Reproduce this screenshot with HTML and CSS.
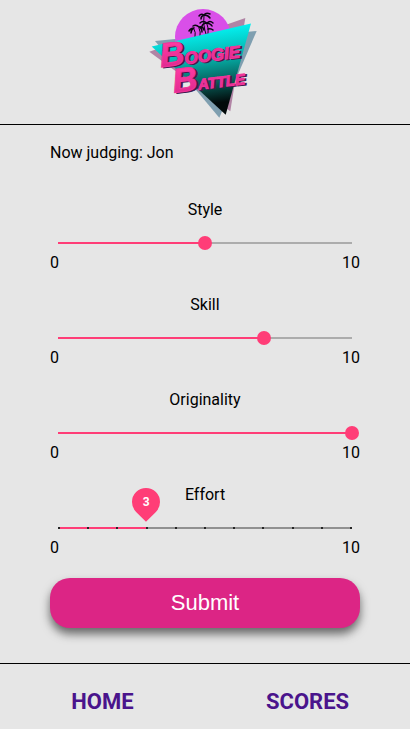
FILE: index.html
```html
<!DOCTYPE html>
<html lang="en">
<head>
  <meta charset="utf-8">
  <meta name="viewport" content="width=device-width, initial-scale=1">
  <title>Boogie Battle</title>
  <link rel="stylesheet" href="styles.css">
</head>
<body>
  <header class="header">
    <svg class="logo" viewBox="148 8 110 112" role="img" aria-label="Boogie Battle">
      <defs>
        <linearGradient id="teal" x1="0" y1="0" x2="0.15" y2="1">
          <stop offset="0.12" stop-color="#04f6f6"/>
          <stop offset="0.45" stop-color="#05b4ad"/>
          <stop offset="0.72" stop-color="#075e59"/>
          <stop offset="0.95" stop-color="#020a0a"/>
        </linearGradient>
        <linearGradient id="pink" x1="0" y1="0" x2="0" y2="1">
          <stop offset="0.2" stop-color="#ff3aa2"/>
          <stop offset="1" stop-color="#d9278c"/>
        </linearGradient>
      </defs>
      <path d="M155 41 256.700 31 219.300 117.700Z" fill="#7f9fb0"/>
      <path d="M149.300 51.700 245.300 18 230.300 111.300Z" fill="#b184a5"/>
      <circle cx="203" cy="37" r="28" fill="#d94fe8"/>
      <g fill="none" stroke="#0a0612" stroke-linecap="round" stroke-width="1">
        <path d="M206 34Q203 26 204 16M208 34Q209 28 207 24M195 37Q196 32 194 29M200 36Q201 32 199 28"/>
        <path stroke-width="1.500" d="M204 15Q201 13 199 16M204 15Q206 12 210 14M204 15Q208 15 210 18M204 15Q201 16 201 19M207 23Q203 20 200 23M207 23Q210 20 213 23M207 23Q203 23 202 26M207 23Q211 24 212 26M194 28Q191 28 189 31M194 28Q191 30 191 33M199 27Q196 24 193 26M199 27Q203 26 204 30M199 27Q202 28 202 32M208 29Q211 28 213 30"/>
      </g>
      <path d="M151.700 46.500 251 23.500 225.700 114.700Z" fill="url(#teal)"/>
      <g class="logo-shadow" transform="rotate(-7 162 68)">
        <text x="163" y="68"><tspan class="logo-cap">B</tspan><tspan class="logo-mid">OOGIE</tspan></text>
        <text x="173" y="95"><tspan class="logo-cap">B</tspan><tspan class="logo-low">ATTLE</tspan></text>
      </g>
      <g class="logo-face" aria-hidden="true" transform="rotate(-7 162 68)">
        <text x="161" y="67"><tspan class="logo-cap">B</tspan><tspan class="logo-mid">OOGIE</tspan></text>
        <text x="171" y="94"><tspan class="logo-cap">B</tspan><tspan class="logo-low">ATTLE</tspan></text>
      </g>
    </svg>
  </header>

  <main class="main">
    <p class="judging">Now judging: Jon</p>
    <form class="form">
      <div class="field">
        <label class="name" for="style">Style</label>
        <input class="slider" id="style" type="range" min="0" max="10" value="5" style="--value: 50%">
        <div class="limits"><span>0</span><span>10</span></div>
      </div>
      <div class="field">
        <label class="name" for="skill">Skill</label>
        <input class="slider" id="skill" type="range" min="0" max="10" value="7" style="--value: 70%">
        <div class="limits"><span>0</span><span>10</span></div>
      </div>
      <div class="field">
        <label class="name" for="originality">Originality</label>
        <input class="slider" id="originality" type="range" min="0" max="10" value="10" style="--value: 100%">
        <div class="limits"><span>0</span><span>10</span></div>
      </div>
      <div class="field field-active" style="--value: 30%">
        <label class="name" for="effort">Effort</label>
        <div class="track">
          <input class="slider" id="effort" type="range" min="0" max="10" value="3">
          <div class="overlay">
            <div class="ticks"><i></i><i></i><i></i><i></i><i></i><i></i><i></i><i></i><i></i><i></i><i></i></div>
            <output class="bubble" for="effort"><span>3</span></output>
          </div>
        </div>
        <div class="limits"><span>0</span><span>10</span></div>
      </div>
      <button class="submit" type="submit">Submit</button>
    </form>
  </main>

  <nav class="nav">
    <a href="#home">HOME</a>
    <a href="#scores">SCORES</a>
  </nav>
</body>
</html>
```
FILE: styles.css
```css
* {
  box-sizing: border-box;
}

body {
  display: flex;
  flex-direction: column;
  min-height: 100vh;
  margin: 0;
  background: #e6e6e6;
  color: #000;
  font: 16px/20px Roboto, "Liberation Sans", sans-serif;
}

.header {
  display: flex;
  justify-content: center;
  padding: 8px 0 4px;
  border-bottom: 1px solid #000;
}

.logo {
  width: 110px;
  height: 112px;
  margin-right: 4px;
}

.logo text {
  font-family: "Liberation Sans", sans-serif;
  font-style: italic;
  font-weight: bold;
}

.logo .logo-cap {
  font-size: 34px;
}

.logo .logo-mid {
  font-size: 17px;
}

.logo .logo-low {
  font-size: 15px;
}

.logo-shadow {
  fill: #40184e;
  stroke: #40184e;
  stroke-width: 1px;
}

.logo-face {
  fill: url(#pink);
  stroke: #f0359b;
  stroke-width: 1px;
}

.main {
  flex: 1;
  padding: 18px 50px 35px;
}

.judging {
  margin: 0 0 37px;
}

.form {
  display: flex;
  flex-direction: column;
}

.field {
  display: flex;
  flex-direction: column;
}

.field + .field {
  margin-top: 22px;
}

.name {
  align-self: center;
  margin-bottom: 15px;
}

.slider {
  --rail: #acacac;
  display: block;
  flex: none;
  width: calc(100% - 2px);
  height: 16px;
  margin: 0 1px;
  appearance: none;
  background:
    linear-gradient(to right, #ff3d77 var(--value), var(--rail) var(--value))
    center / calc(100% - 14px) 2px no-repeat;
  cursor: pointer;
}

.slider::-webkit-slider-thumb {
  width: 14px;
  height: 14px;
  appearance: none;
  border-radius: 50%;
  background: #ff3d77;
}

.field-active .slider {
  --rail: #919191;
}

.field-active .slider::-webkit-slider-thumb {
  opacity: 0;
}

.track {
  position: relative;
}

.overlay {
  position: absolute;
  inset: 0 8px;
  pointer-events: none;
}

.ticks {
  display: flex;
  align-items: center;
  justify-content: space-between;
  height: 100%;
}

.ticks i {
  width: 2px;
  height: 2px;
  background: #262626;
}

.bubble {
  position: absolute;
  bottom: 20px;
  left: var(--value);
  display: grid;
  place-items: center;
  width: 28px;
  height: 28px;
  margin-left: -14px;
  border-radius: 50% 50% 0 50%;
  background: #ff3d77;
  color: #fff;
  font-size: 12px;
  font-weight: 700;
  transform: rotate(45deg);
}

.bubble span {
  transform: rotate(-45deg);
}

.limits {
  display: flex;
  justify-content: space-between;
  margin-top: 2px;
}

.submit {
  height: 50px;
  margin-top: 20px;
  border: 0;
  border-radius: 20px;
  background: #dc2585;
  box-shadow: 0 6px 10px rgba(0, 0, 0, 0.55);
  color: #fff;
  font: 22px "Liberation Sans", sans-serif;
  cursor: pointer;
}

.nav {
  display: grid;
  grid-template-columns: 1fr 1fr;
  padding: 25px 0 15px;
  border-top: 1px solid #000;
  font-size: 22px;
  font-weight: 700;
  line-height: 25px;
  text-align: center;
}

.nav a {
  color: #4a148c;
  text-decoration: none;
}
```
